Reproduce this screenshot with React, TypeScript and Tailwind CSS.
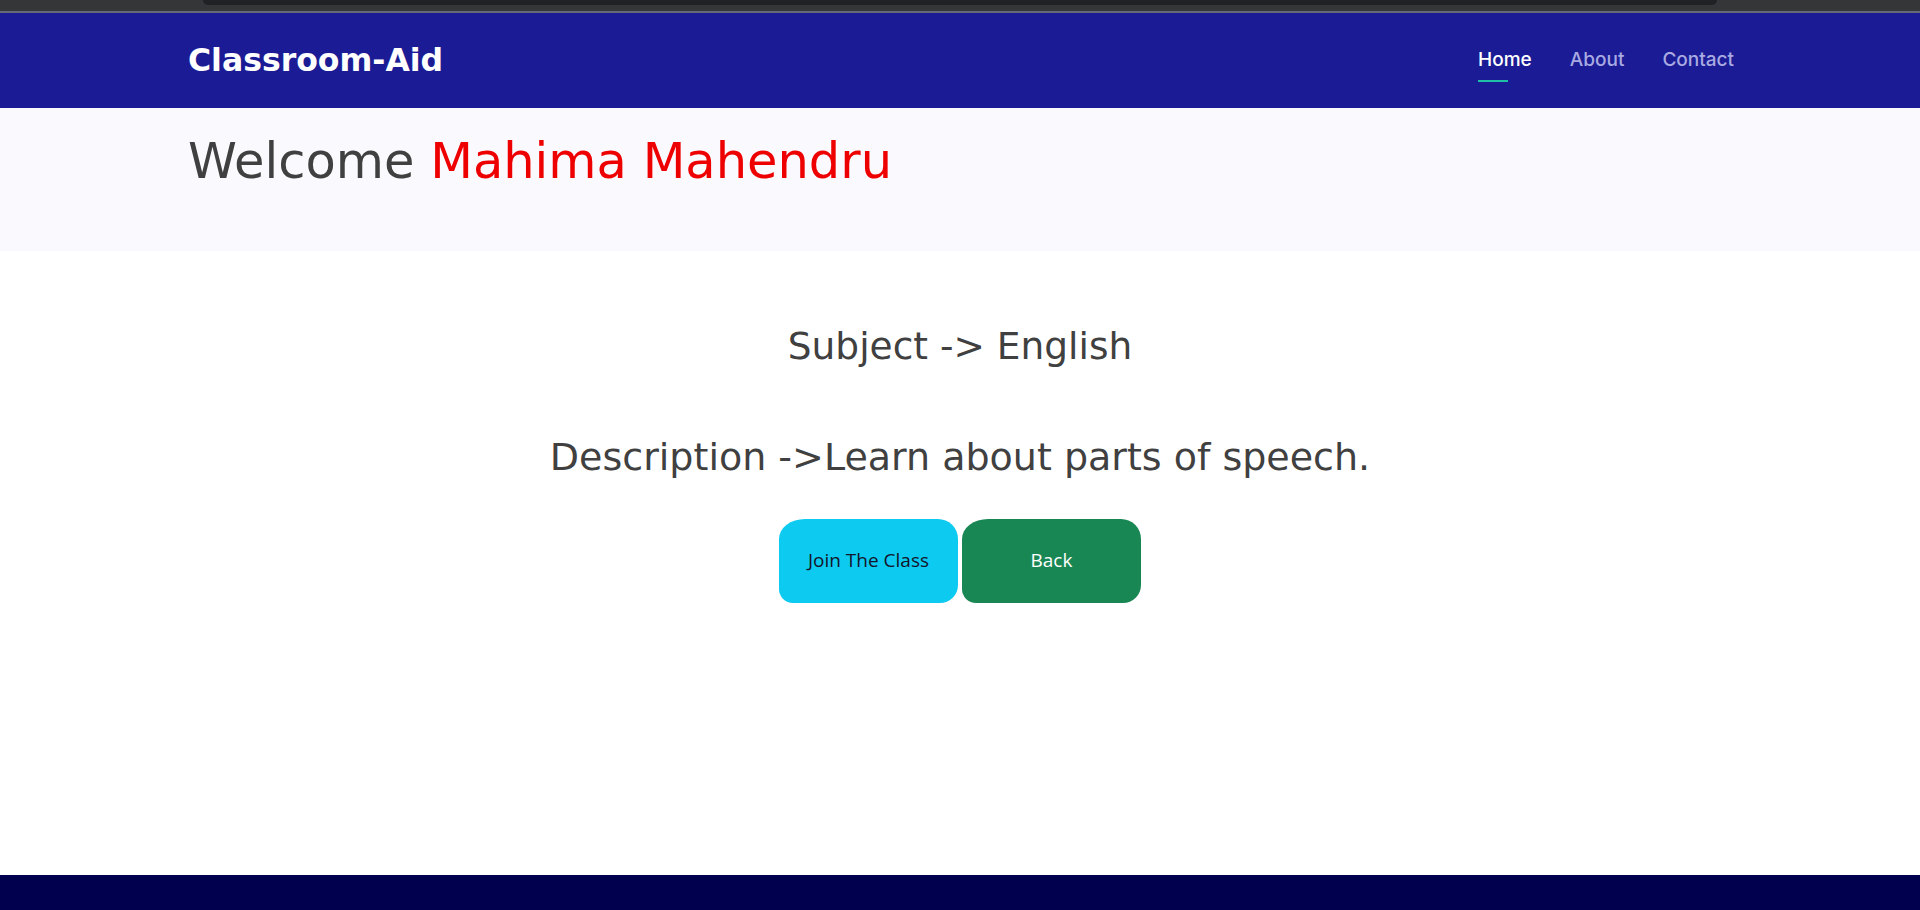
export default function App() {
  return (
    <div className="min-h-[910px] flex flex-col bg-white font-['DejaVu_Sans',sans-serif]">
      {/* browser chrome strip */}
      <div className="h-[11px] bg-[#353637] flex justify-center">
        <div className="w-[1514px] h-[5px] bg-[#202124] rounded-b-[12px]" />
      </div>
      <div className="h-[2px] bg-[#666978]" />

      <header className="h-[95px] bg-[#1b1c95] flex items-center justify-between pl-[188px] pr-[186px]">
        <span className="text-white font-bold text-[31.5px]">Classroom-Aid</span>
        <nav className="flex items-center gap-[38px] text-[19px] font-medium pt-[6.5px] font-['Inter',sans-serif]">
          <a className="text-white relative pb-[7.5px]">
            Home
            <span className="absolute left-0 bottom-0 w-[30px] h-[2px] bg-[#1fbfa6]" />
          </a>
          <a className="text-[#a9aae2] pb-[7.5px]">About</a>
          <a className="text-[#a9aae2] pb-[7.5px]">Contact</a>
        </nav>
      </header>

      <section className="h-[143px] bg-[#f9f9fe] px-[188px] pt-[24px]">
        <h1 className="text-[49.5px] leading-[1.2] text-[#404040]">
          Welcome <span className="text-[#ee0000]">Mahima Mahendru</span>
        </h1>
      </section>

      <main className="flex-1 flex flex-col items-center pt-[73px] text-[#404040]">
        <h2 className="text-[37.5px] leading-[1.2]">Subject -&gt; English</h2>
        <h2 className="text-[38px] leading-[1.2] mt-[66px]">Description -&gt;Learn about parts of speech.</h2>
        <div className="flex gap-[4px] mt-[38px] font-['Open_Sans',sans-serif] text-[19px]">
          <button className="w-[179px] h-[84px] rounded-tl-[26px_20px] rounded-tr-[20px] rounded-br-[18px] rounded-bl-[14px] bg-[#0dcaf0] text-[#14142a]">
            Join The Class
          </button>
          <button className="w-[179px] h-[84px] rounded-tl-[26px_20px] rounded-tr-[20px] rounded-br-[18px] rounded-bl-[14px] bg-[#198754] text-white">
            Back
          </button>
        </div>
      </main>

      <footer className="h-[35px] bg-[#00004f]" />
    </div>
  );
}
